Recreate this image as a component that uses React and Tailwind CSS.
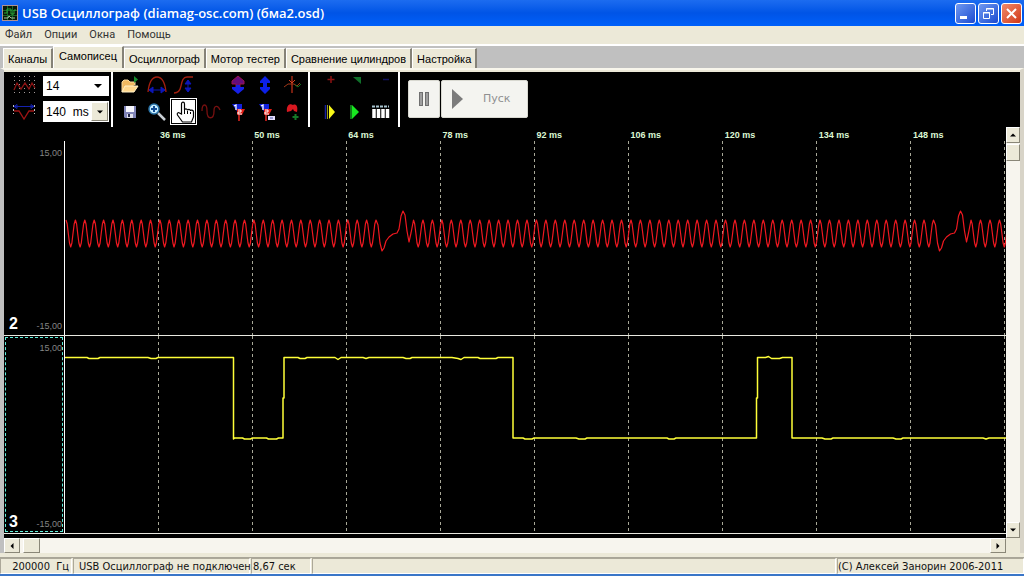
import React from 'react';

const tabs = ['Каналы', 'Самописец', 'Осциллограф', 'Мотор тестер', 'Сравнение цилиндров', 'Настройка'];
const menu = ['Файл', 'Опции', 'Окна', 'Помощь'];
const times = ['36 ms', '50 ms', '64 ms', '78 ms', '92 ms', '106 ms', '120 ms', '134 ms', '148 ms'];

// Crankshaft sensor: even teeth with a gap at every missing tooth
const sensorPath = () => {
  const points = [];
  const addTeeth = (from, to, count) => {
    const step = (to - from) / count;
    for (let i = 0; i <= count * 8; i++) {
      const y = 92.5 - 13.5 * Math.cos((i / 8) * 2 * Math.PI);
      points.push(`${(from + (i / 8) * step).toFixed(1)} ${y.toFixed(1)}`);
    }
  };
  const addGap = (x) => {
    [[2, 84], [4, 102], [6, 110], [8, 107], [10, 100], [13, 96], [17, 93], [21, 92], [23, 88], [25, 75], [27, 70], [29, 74], [31, 90], [33, 101], [35, 92]]
      .forEach(([dx, y]) => points.push(`${x + dx} ${y}`));
  };
  addTeeth(1, 311, 33);
  addGap(311);
  addTeeth(348.5, 868.5, 55);
  addGap(868.5);
  addTeeth(906, 944, 4);
  return `M${points.join(' L')}`;
};

const sensor = sensorPath();
const pulses =
  'M0 21.500 h22 l2 1 h9 l2 -1 h48 l3 1 h5 l2 -1 h75.500 V103 l1 -1 h8 l2 1 h6 l2 -1 h14 l2 1 h8 l2 -1 h4.500 V62 h1 V21.500 h14 l2 1 h5 l2 -1 h28 l3 2 l3 -2 h22 l3 1 l3 -1 h34 l3 1 h4 l2 -1 h40 l6 1 l3 1 l3 -2 h14 l2 1 h16 l2 -1 h15 V102 h10 l2 1 h7 l2 -1 h42 l3 1 h6 l2 -1 h80 l2 1 h5 l2 -1 h80.500 V62 h1 V21.500 h8 l3 -1 l3 2 h8 l3 -1 h9.500 V102 h30 l3 1 h6 l2 -1 h60 l3 1 h5 l2 -1 h80 l3 1 l3 -1 h18';

const GridLines = ({ height }) =>
  Array.from({ length: 10 }, (_, i) => (
    <line key={i} x1={93.5 + i * 94} x2={93.5 + i * 94} y1="0" y2={height} stroke="#a8a898" strokeDasharray="3 3" />
  ));

const Icon = ({ children, size = 'h-5 w-6' }) => (
  <svg viewBox="0 0 24 20" className={size} fill="none" aria-hidden="true">
    {children}
  </svg>
);

const GridIcon = () => (
  <Icon>
    <path d="M2.500 1v18M7.500 1v18M12.500 1v18M17.500 1v18M22.500 1v18" stroke="#a39a9a" strokeDasharray="1 3" />
    <path d="M2 15l3-7 4 6 4-6 4 6 3-6 3 5" stroke="#8c1414" strokeWidth="1.300" />
  </Icon>
);
const SpanIcon = () => (
  <Icon>
    <path d="M1.500 3v9M22.500 3v9" stroke="#c0c0c0" strokeDasharray="2 2" />
    <path d="M2 4.500h20M2 4.500l3-2v4zM22 4.500l-3-2v4z" stroke="#1522b0" />
    <path d="M2 9h5l5 8 5-8h5" stroke="#a01414" strokeWidth="1.300" />
  </Icon>
);
const OpenIcon = () => (
  <Icon>
    <path d="M4 17V7l2-2h4l2 2h5v3" fill="#f0b860" stroke="#f5d9a0" />
    <path d="M4 17l3-6h13l-4 6z" fill="#ffd78c" stroke="#fff0c8" />
    <path d="M16 1l4 3.500-4 3.500z" fill="#168c2e" />
  </Icon>
);
const ArcIcon = () => (
  <Icon>
    <path d="M3 17C4 8 6 2 12 2s8 6 9 15" stroke="#a32010" strokeWidth="1.300" />
    <path d="M4 15h16M4 15l4-3v6zM20 15l-4-3v6z" stroke="#0c16b8" fill="#0c16b8" />
  </Icon>
);
const SlopeIcon = () => (
  <Icon>
    <path d="M2 18c4 0 6-2 7-7s2-9 6-9h6" stroke="#a32010" strokeWidth="1.300" />
    <path d="M16 5v12M16 5l-3 4h6zM16 17l-3-4h6z" stroke="#0c16b8" fill="#0c16b8" />
  </Icon>
);
const SplitIcon = () => (
  <Icon>
    <path d="M12 1l6 5v3h-4v3h-4V9H6V6z" fill="#640c7c" stroke="#9c1450" />
    <path d="M10 10h4v2h4v2l-6 5-6-5v-2h4z" fill="#1620e8" />
  </Icon>
);
const VerticalIcon = () => (
  <Icon>
    <path d="M12 1l5 5v2h-3v4h3v2l-5 5-5-5v-2h3V8H7V6z" fill="#0c20e8" />
  </Icon>
);
const ZeroIcon = () => (
  <Icon>
    <path d="M12 1v17" stroke="#a02814" strokeWidth="1.500" />
    <path d="M9 5l3 3 3-3" stroke="#d84020" />
    <path d="M4 12l4-3h6l3 2 3-3" stroke="#a03818" />
    <path d="M15 10l3 2 3-3" stroke="#0f7020" />
  </Icon>
);
const SaveIcon = () => (
  <Icon>
    <path d="M6 4h12v12H7l-1-1z" fill="#8084b8" />
    <path d="M8 4h8v6H8z" fill="#f7f7ff" />
    <path d="M9 12h6v4H9z" fill="#e0e0ec" />
    <path d="M10 12h2v3h-2z" fill="#24284c" />
  </Icon>
);
const ZoomIcon = () => (
  <Icon>
    <path d="M13 11l7 7" stroke="#c8ced4" strokeWidth="2.500" />
    <circle cx="9" cy="7" r="5" fill="#c6edff" stroke="#2b74a8" strokeWidth="1.500" />
    <path d="M6 7h6M9 4v6" stroke="#124c94" strokeWidth="2" />
  </Icon>
);
const HandIcon = () => (
  <svg viewBox="0 0 24 24" className="h-6 w-6" fill="none" aria-hidden="true">
    <path
      d="M9.500 14V4c0-2.500 3-2.500 3 0v6c0-1.500 3-1.500 3 .5 0-1.500 3-1.500 3 .5 0-1.500 3-1 3 1v5l-2 5h-9l-5-7c-1-2 1-3 2-2z"
      fill="#fff"
      stroke="#000"
      strokeWidth="1.200"
    />
    <path d="M12.500 10v4M15.500 11v3M18.500 12v2" stroke="#000" />
  </svg>
);
const WaveIcon = () => (
  <Icon>
    <path d="M3 9c0-8 5-8 5 0 0 9 7 9 7 0 0-6 4-6 6-1" stroke="#781010" strokeWidth="1.300" />
  </Icon>
);
const CursorMarks = () => (
  <>
    <path d="M6 2h10v6l-4 3z" fill="#1220dc" />
    <path d="M11 7h8l-3 6h-5z" fill="#e01c14" />
    <path d="M13 12v7" stroke="#b01c18" strokeWidth="2" />
    <path d="M8 4l2-1v5" stroke="#fff" strokeWidth="1.300" />
    <path d="M12 8h3v2h-3v2h4" stroke="#fff" />
  </>
);
const MarkersIcon = () => (
  <Icon>
    <CursorMarks />
  </Icon>
);
const MarkersSaveIcon = () => (
  <Icon>
    <CursorMarks />
    <path d="M15 14h7v4h-7z" fill="#e4e0ff" />
    <path d="M17 16h3" stroke="#4850a0" />
  </Icon>
);
const AddIcon = () => (
  <Icon>
    <path d="M7 10C6 3 10 1 13 3c4-2 5 3 4 7l-3-1-1-2-2 2z" fill="#d81820" />
    <path d="M15.500 12v6M12.500 15h6" stroke="#147828" strokeWidth="2" />
  </Icon>
);
const PlusIcon = () => (
  <Icon>
    <path d="M13 1v7M9.500 4.500h7" stroke="#8c1212" strokeWidth="1.500" />
  </Icon>
);
const CornerIcon = () => (
  <Icon>
    <path d="M11 2h8v7z" fill="#10702a" />
  </Icon>
);
const MinusIcon = () => (
  <Icon>
    <path d="M15 4.500h6" stroke="#10105c" strokeWidth="1.500" />
  </Icon>
);
const PlayYellowIcon = () => (
  <Icon>
    <path d="M7.500 3v14" stroke="#1820a0" strokeWidth="1.500" />
    <path d="M9.500 3v14" stroke="#a0a018" />
    <path d="M11 3l6 7-6 7z" fill="#f8f818" />
  </Icon>
);
const PlayGreenIcon = () => (
  <Icon>
    <path d="M9 3v14" stroke="#107818" strokeWidth="2" />
    <path d="M10 3l7 7-7 7z" fill="#18e820" />
  </Icon>
);
const TableIcon = () => (
  <Icon>
    <path d="M4 4.500h17" stroke="#a8c4d0" strokeWidth="2" strokeDasharray="3 1" />
    <path d="M6 7v9M10.500 7v9M15 7v9M19.500 7v9" stroke="#fff" strokeWidth="3.500" />
  </Icon>
);

const viewTools = [
  ['Открыть', OpenIcon],
  ['Период', ArcIcon],
  ['Фронт', SlopeIcon],
  null,
  ['Растянуть', SplitIcon],
  ['Сдвинуть', VerticalIcon],
  ['Ноль', ZeroIcon],
  ['Сохранить', SaveIcon],
  ['Увеличить', ZoomIcon],
  ['Рука', HandIcon, true],
  ['Сигнал', WaveIcon],
  ['Метки', MarkersIcon],
  ['Сохранить метки', MarkersSaveIcon],
  ['Добавить', AddIcon]
];

const playTools = [
  ['Плюс', PlusIcon],
  ['Угол', CornerIcon],
  ['Минус', MinusIcon],
  ['Вперёд', PlayYellowIcon],
  ['Воспроизвести', PlayGreenIcon],
  ['Таблица', TableIcon]
];

const ToolButton = ({ tool }) => {
  if (!tool) return <span />;
  const [title, Picture, active] = tool;
  return (
    <button
      aria-label={title}
      aria-pressed={!!active}
      className={active ? 'flex items-center justify-center border border-white bg-white outline outline-1 -outline-offset-2 outline-black' : 'flex items-center justify-center'}
    >
      <Picture />
    </button>
  );
};

const Divider = () => <div className="w-[2px] shrink-0 self-stretch bg-white" />;

const Arrow = ({ points, label, className }) => (
  <button
    aria-label={label}
    className={`flex shrink-0 items-center justify-center border border-t-white border-l-white border-r-[#8a8778] border-b-[#8a8778] bg-[#ece9d8] ${className}`}
  >
    <svg viewBox="0 0 8 8" className="h-[6px] w-[6px]" aria-hidden="true">
      <polygon points={points} fill="#000" />
    </svg>
  </button>
);

const Channel = ({ number, height, viewBox, path, color, stroke, selected, plotClass }) => (
  <div className="flex border-b border-[#e8e8e0]">
    <div className="flex w-[60px] shrink-0 p-px">
      <div
        className={`flex flex-1 flex-col justify-between border border-dashed pl-[3px] text-[9px] text-[#858585] ${selected ? 'border-[#60f0dc]' : 'border-transparent'}`}
      >
        <span className="pt-1 text-right leading-3">15,00</span>
        <div className="flex items-end justify-between">
          <b className="text-base leading-[18px] text-white">{number}</b>
          <span className="leading-[14px]">-15,00</span>
        </div>
      </div>
    </div>
    <div className="min-w-0 flex-1 border-l border-white">
      <svg viewBox={viewBox} preserveAspectRatio="none" className={`block w-full ${plotClass}`} fill="none" role="img" aria-label={`Канал ${number}`}>
        <GridLines height={height} />
        <path d={path} stroke={color} strokeWidth={stroke} strokeLinejoin="round" />
      </svg>
    </div>
  </div>
);

const TitleBar = () => (
  <header className="flex h-[26px] items-center bg-linear-to-b from-[#1c6cf0] via-[#0054e6] to-[#0060fa] pr-[2px] pl-[2px]">
    <svg viewBox="0 0 16 16" className="h-4 w-4" aria-hidden="true">
      <rect x="0.5" y="0.5" width="15" height="15" fill="#081808" stroke="#b09090" />
      <path d="M1 5.500h14M1 10.500h14M5.500 1v14M10.500 1v14" stroke="#186828" />
      <path d="M2 8h3V4h4v5h3V5h2" fill="none" stroke="#28a838" />
      <path d="M2 13h4l1-2 2 2h4" fill="none" stroke="#a0c8a0" />
    </svg>
    <h1 className="flex-1 pl-1 font-['Open_Sans','Noto_Sans',sans-serif] text-[13px] leading-5 font-semibold text-white">
      USB Осциллограф (diamag-osc.com) (бма2.osd)
    </h1>
    <div className="flex gap-[2px]">
      <button aria-label="Свернуть" className="h-[21px] w-[21px] rounded-[3px] border border-white bg-linear-to-br from-[#7098f0] to-[#1c48d0]">
        <svg viewBox="0 0 19 19" aria-hidden="true">
          <path d="M4 13.500h7" stroke="#fff" strokeWidth="3" />
        </svg>
      </button>
      <button aria-label="Восстановить" className="h-[21px] w-[21px] rounded-[3px] border border-white bg-linear-to-br from-[#7098f0] to-[#1c48d0]">
        <svg viewBox="0 0 19 19" fill="none" stroke="#fff" aria-hidden="true">
          <path d="M7.500 7V4.500h7v6H12M7 5h8" />
          <path d="M4.500 8.500h6v6h-6zM4 9h7" />
        </svg>
      </button>
      <button aria-label="Закрыть" className="h-[21px] w-[21px] rounded-[3px] border border-white bg-linear-to-br from-[#f08868] to-[#d03410]">
        <svg viewBox="0 0 19 19" aria-hidden="true">
          <path d="M5 5l9 9M14 5l-9 9" stroke="#fff" strokeWidth="2" />
        </svg>
      </button>
    </div>
  </header>
);

const Toolbar = () => (
  <div className="flex h-[55px] text-xs text-black">
    <div className="grid h-[53px] w-[39px] grid-rows-2 place-items-center">
      <GridIcon />
      <SpanIcon />
    </div>
    <div className="flex w-[66px] flex-col justify-between pt-[4px] pb-[5px]">
      <div className="grid bg-white">
        <select aria-label="Каналов" defaultValue="14" className="col-start-1 row-start-1 h-5 appearance-none pl-[3px]">
          <option>14</option>
        </select>
        <svg viewBox="0 0 8 8" className="pointer-events-none col-start-1 row-start-1 mr-[7px] h-2 w-2 self-center justify-self-end" aria-hidden="true">
          <polygon points="0,2 8,2 4,6" />
        </svg>
      </div>
      <div className="flex h-[21px] bg-white">
        <input aria-label="Развёртка" defaultValue="140  ms" className="min-w-0 flex-1 pl-[3px] whitespace-pre" />
        <Arrow points="0,2 8,2 4,6" label="Выбрать развёртку" className="m-px w-[17px]" />
      </div>
    </div>
    <div className="w-[2px]" />
    <Divider />
    <div className="mx-[2px] grid h-[53px] grid-cols-[repeat(7,27px)] grid-rows-[26px_27px] pl-px">
      {viewTools.map((tool, i) => (
        <ToolButton key={i} tool={tool} />
      ))}
    </div>
    <div className="w-px" />
    <Divider />
    <div className="ml-[8px] grid h-[53px] w-[80px] grid-cols-[24px_24px_28px] grid-rows-2">
      {playTools.map((tool) => (
        <ToolButton key={tool[0]} tool={tool} />
      ))}
    </div>
    <Divider />
    <div className="flex gap-px py-2 pb-[9px] pl-[8px]">
      <button aria-label="Пауза" className="flex w-8 items-center justify-center rounded-[2px] border border-[#d8d8d0] bg-[#f4f4f0]">
        <svg viewBox="0 0 12 16" className="h-4 w-3" fill="#a0a0a0" stroke="#707070" aria-hidden="true">
          <rect x="1.500" y="1.500" width="3" height="13" />
          <rect x="7.500" y="1.500" width="3" height="13" />
        </svg>
      </button>
      <button className="flex w-[87px] items-center gap-5 rounded-[2px] border border-[#d8d8d0] bg-[#f4f4f0] pl-[9px] font-['DejaVu_Sans',sans-serif] text-[11px] text-[#909090]">
        <svg viewBox="0 0 12 20" className="h-5 w-3" aria-hidden="true">
          <polygon points="1,0 12,10 1,20" fill="#7c7c7c" />
        </svg>
        Пуск
      </button>
    </div>
  </div>
);

const StatusCell = ({ children, className }) => (
  <div className={`border border-t-[#aca899] border-r-white border-b-white border-l-[#aca899] whitespace-pre ${className}`}>{children}</div>
);

const App = () => (
  <div className="flex min-h-screen flex-col bg-[#ece9d8] font-['Liberation_Sans',Arial,sans-serif] text-[#111]">
    <TitleBar />
    <nav className="flex h-[18px] items-center gap-3 bg-[#ece9d8] px-[5px] font-['Roboto',sans-serif] text-[11px] leading-4 text-[#333]">
      {menu.map((item) => (
        <button key={item}>{item}</button>
      ))}
    </nav>

    <div role="tablist" className="flex h-6 items-end border-t-2 border-white bg-[#c0c0c0] pl-[3px] text-[11px] leading-4 text-black">
      {tabs.map((tab, i) => (
        <button
          key={tab}
          role="tab"
          aria-selected={i === 1}
          className={`border-t border-r-2 border-l border-t-white border-r-[#858278] border-l-white bg-[#ece9d8] whitespace-nowrap ${i === 1 ? 'h-[22px] px-[5px] pb-1' : 'h-5 px-[4px]'}`}
        >
          {tab}
        </button>
      ))}
    </div>

    <main className="flex flex-1 flex-col border-t-2 border-r-4 border-l-4 border-t-[#f8f6ec] border-r-[#d8d4c8] border-l-[#c0c0c0] pt-[2px]">
      <div className="flex flex-1 flex-col bg-black">
        <Toolbar />
        <div className="flex flex-1">
          <div className="flex min-w-0 flex-1 flex-col">
            <div className="grid h-[14px] grid-cols-10 pl-[61px] text-[9px] leading-4 font-bold text-[#dcf8d4]">
              {times.map((time, i) => (
                <span key={time} className={i === 0 ? 'col-start-2 pl-px' : 'pl-px'}>
                  {time}
                </span>
              ))}
            </div>
            <Channel number={2} height={194} viewBox="0 0 941 194" plotClass="h-[194px]" path={sensor} color="#f01820" stroke="1.2" />
            <Channel number={3} height={197} viewBox="0 0 941 197" plotClass="h-[197px]" path={pulses} color="#ffff38" stroke="1.5" selected />
          </div>
          <div className="flex w-[14px] flex-col bg-[#f7f5ee]">
            <Arrow points="0,6 4,2 8,6" label="Вверх" className="h-4" />
            <div className="mt-px h-[17px] border border-t-white border-r-[#8a8778] border-b-[#8a8778] border-l-white bg-[#ece9d8]" />
            <div className="flex-1" />
            <Arrow points="0,2 8,2 4,6" label="Вниз" className="h-4" />
          </div>
        </div>
      </div>
      <div className="flex h-[15px] bg-[#f7f5ee]">
        <Arrow points="6,0 2,4 6,8" label="Влево" className="w-4" />
        <div className="ml-[3px] w-[17px] border border-t-white border-r-[#8a8778] border-b-[#8a8778] border-l-white bg-[#ece9d8]" />
        <div className="flex-1" />
        <Arrow points="2,0 6,4 2,8" label="Вправо" className="w-4" />
        <div className="w-[14px] bg-[#ece9d8]" />
      </div>
    </main>

    <footer className="mt-1 flex h-[19px] gap-px border-t border-b-2 border-t-[#a8a598] border-b-[#3a76c8] font-['DejaVu_Sans_Condensed','DejaVu_Sans',sans-serif] text-[11px] leading-4">
      <StatusCell className="w-[72px] pr-[2px] text-right">200000  Гц</StatusCell>
      <StatusCell className="w-[177px] pl-[5px]">USB Осциллограф не подключен</StatusCell>
      <StatusCell className="w-[60px] pl-[1px]">8,67 сек</StatusCell>
      <StatusCell className="flex-1" />
      <StatusCell className="w-[187px]">(C) Алексей Занорин 2006-2011</StatusCell>
    </footer>
  </div>
);

export default App;
